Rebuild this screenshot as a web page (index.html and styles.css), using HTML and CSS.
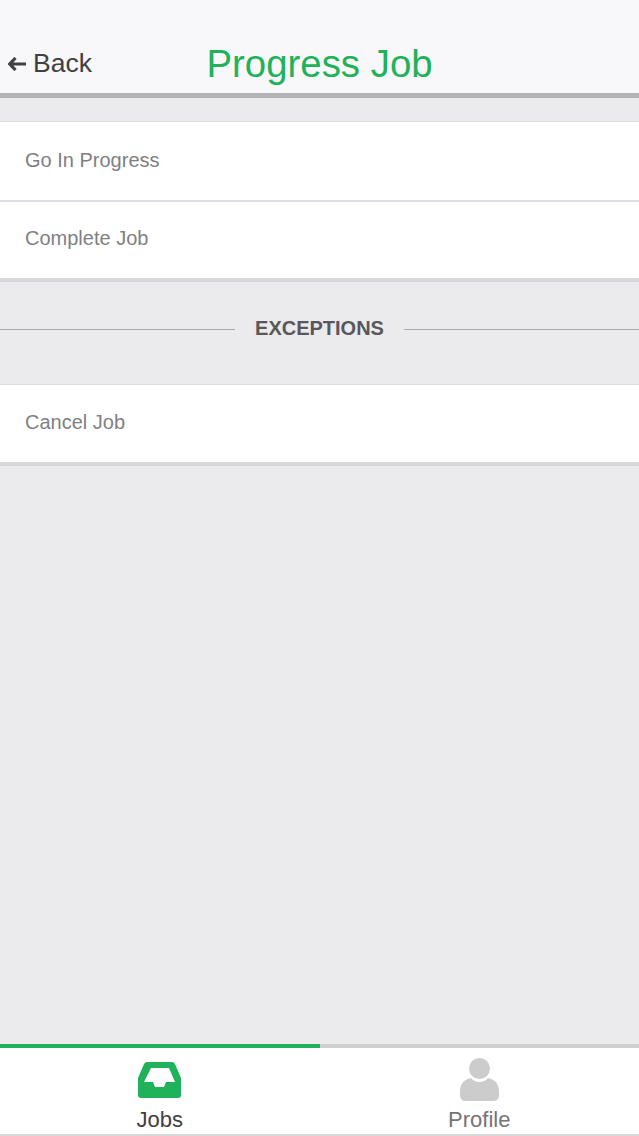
FILE: index.html
```html
<!DOCTYPE html>
<html lang="en">
<head>
    <meta charset="UTF-8">
    <meta name="viewport" content="width=device-width, initial-scale=1.0">
    <title>Progress Job</title>
    <link rel="stylesheet" href="styles.css">
</head>
<body>
    <div class="app">
        <header class="topbar">
            <div class="back">
                <svg class="back-icon" width="18" height="14" viewBox="0 0 18 14">
                    <path d="M7.500 1 L1.800 7 L7.500 13 M3 7 H18" fill="none" stroke="#414042" stroke-width="3.200"/>
                </svg>
                <span>Back</span>
            </div>
            <h1 class="title">Progress Job</h1>
        </header>

        <main class="content">
            <div class="list first">
                <div class="row">Go In Progress</div>
                <div class="row">Complete Job</div>
            </div>

            <div class="divider">
                <span class="divider-line"></span>
                <span class="divider-text">EXCEPTIONS</span>
                <span class="divider-line"></span>
            </div>

            <div class="list last">
                <div class="row">Cancel Job</div>
            </div>
        </main>

        <div class="progress">
            <div class="progress-fill"></div>
        </div>

        <nav class="tabs">
            <div class="tab active">
                <svg class="tab-icon" width="43" height="36" viewBox="0 0 43 36">
                    <path fill-rule="evenodd" fill="#1fb25a" d="M9 0 H34 Q36 0 37 2 L43 16 V33 Q43 36 40 36 H3 Q0 36 0 33 V16 L6 2 Q7 0 9 0 Z M13 6 L6 20 H15 L17 25 H26 L28 20 H37 L31 6 Z"/>
                </svg>
                <span class="tab-label">Jobs</span>
            </div>
            <div class="tab">
                <svg width="39" height="43" viewBox="0 0 39 43">
                    <path fill="#cdcccd" d="M11 20 Q14 24 19.500 24 Q25 24 28 20 Q39 22 39 34 V37 Q39 43 33 43 H6 Q0 43 0 37 V34 Q0 22 11 20 Z"/>
                    <circle fill="#cdcccd" cx="19.500" cy="10.500" r="10.500"/>
                </svg>
                <span class="tab-label">Profile</span>
            </div>
        </nav>
    </div>
</body>
</html>
```

FILE: styles.css
```css
*
{
    box-sizing: border-box;
}

body
{
    margin: 0px;
    font-family: "Liberation Sans", Arial, sans-serif;
    background-color: #ebeaec;
}

.app
{
    height: 1136px;
    display: flex;
    flex-direction: column;
}

.topbar
{
    height: 98px;
    padding-top: 35px;
    padding-bottom: 1px;
    background-color: #f8f7f9;
    border-bottom: 5px solid #b5b4b5;
    display: grid;
    grid-template-columns: 1fr auto 1fr;
    align-items: center;
}

.back
{
    display: flex;
    align-items: center;
    gap: 7px;
    padding-left: 8px;
    font-size: 26.5px;
    color: #414042;
}

.title
{
    grid-column: 2;
    margin: 0px;
    font-size: 38.4px;
    font-weight: normal;
    color: #1fb25a;
}

.content
{
    flex: 1;
    padding-top: 23px;
}

.list
{
    background-color: #ffffff;
    border-top: 1px solid #dedcdf;
    border-bottom: 4px solid #d8d7d9;
}

.row
{
    height: 78px;
    padding-left: 25px;
    padding-bottom: 1px;
    display: flex;
    align-items: center;
    font-size: 20px;
    color: #807f83;
}

.row + .row
{
    padding-bottom: 3px;
    border-top: 2px solid #dfdce2;
}

.last .row
{
    height: 77px;
    padding-bottom: 3px;
}

.divider
{
    height: 102px;
    padding-bottom: 8px;
    display: flex;
    align-items: center;
    gap: 20px;
}

.divider-line
{
    flex: 1;
    height: 1px;
    background-color: #a9a8aa;
}

.divider-text
{
    font-size: 20px;
    font-weight: bold;
    color: #58575a;
    margin-bottom: 1px;
}

.progress
{
    height: 4px;
    background-color: #d0cfd0;
}

.progress-fill
{
    width: 320px;
    height: 4px;
    background-color: #1fb25a;
}

.tabs
{
    height: 88px;
    background-color: #ffffff;
    border-bottom: 2px solid #d8d7d9;
    display: grid;
    grid-template-columns: 1fr 1fr;
}

.tab
{
    display: flex;
    flex-direction: column;
    align-items: center;
    justify-content: flex-end;
    gap: 6px;
    padding-bottom: 2px;
}

.tab-icon
{
    margin-bottom: 3px;
}

.tab-label
{
    height: 25px;
    line-height: 25px;
    font-size: 22px;
    color: #757477;
}

.tab.active .tab-label
{
    color: #3f3e41;
}
```
